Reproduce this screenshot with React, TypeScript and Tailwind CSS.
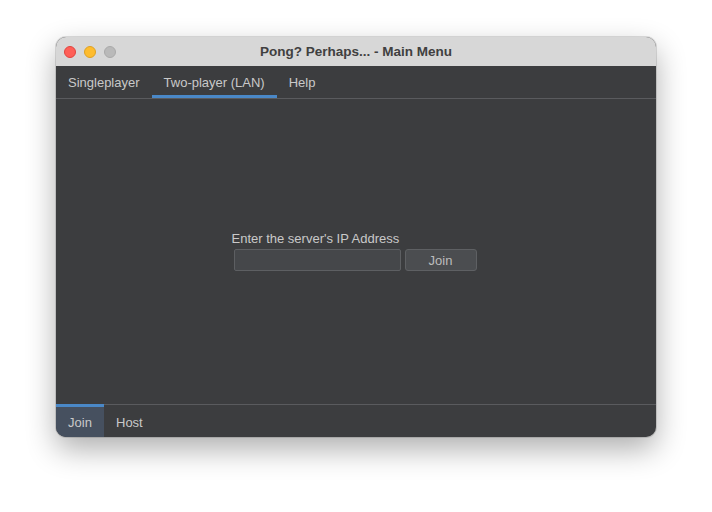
import React from "react";

export default function App() {
  return (
    <div
      className="w-[712px] h-[512px] bg-white pt-[37px] pl-[56px]"
      style={{ fontFamily: "'Liberation Sans', Arial, sans-serif" }}
    >
      <div className="w-[600px] h-[400px] rounded-[10px] overflow-hidden flex flex-col bg-[#3c3d3f] shadow-[0_12px_30px_rgba(0,0,0,0.32),0_0_0_1px_rgba(0,0,0,0.12)]">
        {/* Title bar */}
        <div className="h-[29px] bg-[#d7d7d7] flex items-center relative shrink-0">
          <div className="flex items-center gap-[8px] pl-[8px]">
            <div className="w-[12px] h-[12px] rounded-full bg-[#fe5f57] border border-[#e0443e]" />
            <div className="w-[12px] h-[12px] rounded-full bg-[#febc2e] border border-[#dea123]" />
            <div className="w-[12px] h-[12px] rounded-full bg-[#b9b9b9] border border-[#a9a9a9]" />
          </div>
          <div className="flex-1 text-center text-[13.5px] font-bold text-[#404040] pr-[60px] pt-[1px]">
            Pong? Perhaps... - Main Menu
          </div>
        </div>
        {/* Top tabs */}
        <div className="h-[33px] flex border-b border-[#5a5b5e] shrink-0 text-[13px] text-[#c9c9c9]">
          <div className="px-[12px] flex items-center border-b-[3px] border-transparent pt-[5px]">Singleplayer</div>
          <div className="px-[12px] flex items-center border-b-[3px] border-[#4a88c7] pt-[5px]">
            Two-player (LAN)
          </div>
          <div className="px-[12px] flex items-center border-b-[3px] border-transparent pt-[5px]">Help</div>
        </div>
        {/* Content */}
        <div className="flex-1 flex items-center justify-center">
          <div className="flex flex-col mt-[-2px] ml-[-4px]">
            <div className="text-[13px] text-[#c9c9c9] leading-[16px] mb-[2px]">
              Enter the server's IP Address
            </div>
            <div className="flex gap-[4px] ml-[2px]">
              <div className="w-[167px] h-[22px] bg-[#45474a] border border-[#5d5f62] rounded-[2px]" />
              <div className="w-[72px] h-[22px] bg-[#4b4d50] border border-[#5e6063] rounded-[3px] flex items-center justify-center text-[13px] text-[#bcbcbc] pt-[2px]">
                Join
              </div>
            </div>
          </div>
        </div>
        {/* Bottom tabs */}
        <div className="h-[33px] flex border-t border-[#5a5b5e] shrink-0 text-[13px] text-[#c9c9c9]">
          <div className="w-[48px] flex items-center justify-center bg-[#46505f] border-t-[3px] border-[#4a88c7] mt-[-1px] pt-[2px]">
            Join
          </div>
          <div className="px-[12px] flex items-center pt-[4px]">Host</div>
        </div>
      </div>
    </div>
  );
}
